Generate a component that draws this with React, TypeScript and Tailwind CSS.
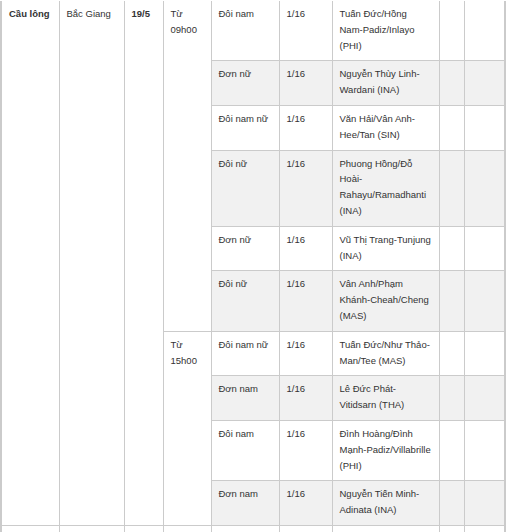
const rows = [
  { event: "Đôi nam", names: "Tuấn Đức/Hồng Nam-Padiz/Inlayo (PHI)" },
  { event: "Đơn nữ", names: "Nguyễn Thùy Linh-Wardani (INA)" },
  { event: "Đôi nam nữ", names: "Văn Hải/Vân Anh-Hee/Tan (SIN)" },
  { event: "Đôi nữ", names: "Phuong Hồng/Đỗ Hoài-Rahayu/Ramadhanti (INA)" },
  { event: "Đơn nữ", names: "Vũ Thị Trang-Tunjung (INA)" },
  { event: "Đôi nữ", names: "Vân Anh/Phạm Khánh-Cheah/Cheng (MAS)" },
  { event: "Đôi nam nữ", names: "Tuấn Đức/Như Thảo-Man/Tee (MAS)" },
  { event: "Đơn nam", names: "Lê Đức Phát-Vitidsarn (THA)" },
  { event: "Đôi nam", names: "Đình Hoàng/Đình Mạnh-Padiz/Villabrille (PHI)" },
  { event: "Đơn nam", names: "Nguyễn Tiến Minh-Adinata (INA)" },
];

const td = "border border-[#cbcbcb] align-top pl-[7px] pr-[6px] pt-[5px] pb-[7px]";

function App() {
  return (
    <div className="bg-white w-[512px] h-[532px] overflow-hidden pt-px font-['Liberation_Sans',Arial,sans-serif] text-[9.5px] leading-[15.8px] text-[#333]">
      <table className="table-fixed border-collapse w-[506px] border-x-2 border-[#cbcbcb]">
        <colgroup>
          <col className="w-[58px]" />
          <col className="w-[65px]" />
          <col className="w-[39px]" />
          <col className="w-[48px]" />
          <col className="w-[68px]" />
          <col className="w-[53px]" />
          <col className="w-[107px]" />
          <col className="w-[25px]" />
          <col className="w-[41px]" />
        </colgroup>
        <tbody>
          {rows.map((r, i) => (
            <tr key={i} className={i % 2 === 1 ? "bg-[#f1f1f1]" : "bg-white"}>
              {i === 0 && (
                <>
                  <td rowSpan={10} className={`${td} border-t-0 bg-white font-bold`}>Cầu lông</td>
                  <td rowSpan={10} className={`${td} border-t-0 bg-white`}>Bắc Giang</td>
                  <td rowSpan={10} className={`${td} border-t-0 bg-white font-bold`}>19/5</td>
                  <td rowSpan={6} className={`${td} border-t-0 bg-white`}>Từ 09h00</td>
                </>
              )}
              {i === 6 && (
                <td rowSpan={4} className={`${td} bg-white`}>Từ 15h00</td>
              )}
              <td className={`${td} ${i === 0 ? "border-t-0" : ""}`}>{r.event}</td>
              <td className={`${td} ${i === 0 ? "border-t-0" : ""}`}>1/16</td>
              <td className={`${td} ${i === 0 ? "border-t-0" : ""}`}>{r.names}</td>
              <td className={`${td} ${i === 0 ? "border-t-0" : ""}`}></td>
              <td className={`${td} ${i === 0 ? "border-t-0" : ""}`}></td>
            </tr>
          ))}
          <tr className="bg-white">
            <td className={td}>&nbsp;</td>
            <td className={td}></td>
            <td className={td}></td>
            <td className={td}></td>
            <td className={td}></td>
            <td className={td}></td>
            <td className={td}></td>
            <td className={td}></td>
            <td className={td}></td>
          </tr>
        </tbody>
      </table>
    </div>
  );
}

export default App;
